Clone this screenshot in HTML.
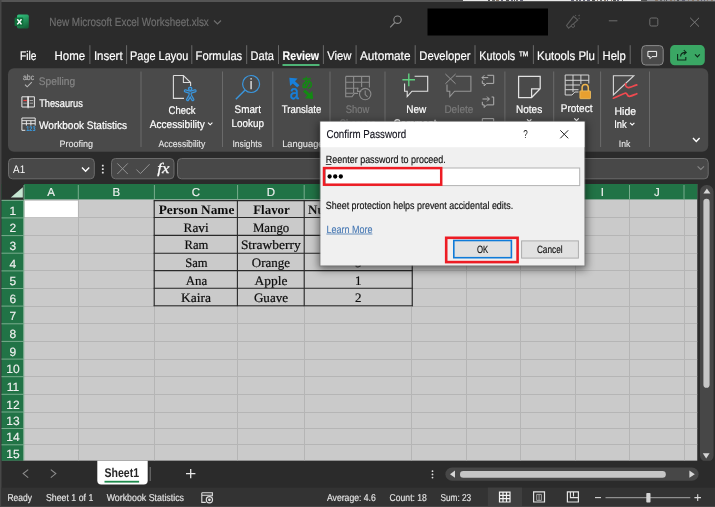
<!DOCTYPE html>
<html><head><meta charset="utf-8"><title>Confirm Password</title>
<style>
html,body{margin:0;padding:0;background:#2b2b2b;width:715px;height:507px;overflow:hidden}
svg{display:block;will-change:transform}
text{white-space:pre}
</style></head><body>
<svg width="715" height="507" viewBox="0 0 715 507" text-rendering="geometricPrecision">
<rect x="0" y="0" width="715" height="507" fill="#2b2b2b" />
<rect x="0" y="0" width="715" height="2" fill="#555555" />
<rect x="463" y="0" width="178" height="1" fill="#e9e9e9" />
<rect x="647" y="0" width="68" height="1" fill="#9fa1a6" />
<rect x="488" y="0" width="2" height="1" fill="#555" />
<rect x="492" y="0" width="3" height="1" fill="#6a6a6a" />
<rect x="496" y="0" width="3" height="1" fill="#8a7a6a" />
<rect x="501" y="0" width="2" height="1" fill="#667" />
<rect x="506" y="0" width="3" height="1" fill="#555" />
<rect x="511" y="0" width="2" height="1" fill="#667" />
<rect x="514" y="0" width="1" height="1" fill="#555" />
<rect x="516" y="0" width="2" height="1" fill="#6a6a6a" />
<rect x="520" y="0" width="3" height="1" fill="#667" />
<rect x="571" y="0" width="3" height="1" fill="#667" />
<rect x="576" y="0" width="2" height="1" fill="#6a6a6a" />
<rect x="579" y="0" width="2" height="1" fill="#667" />
<rect x="583" y="0" width="2" height="1" fill="#667" />
<rect x="587" y="0" width="3" height="1" fill="#667" />
<rect x="592" y="0" width="3" height="1" fill="#555" />
<rect x="597" y="0" width="1" height="1" fill="#8a7a6a" />
<rect x="600" y="0" width="2" height="1" fill="#6a6a6a" />
<rect x="604" y="0" width="2" height="1" fill="#8a7a6a" />
<rect x="607" y="0" width="1" height="1" fill="#667" />
<rect x="611" y="0" width="1" height="1" fill="#8a7a6a" />
<rect x="613" y="0" width="3" height="1" fill="#555" />
<rect x="617" y="0" width="2" height="1" fill="#667" />
<rect x="622" y="0" width="1" height="1" fill="#6a6a6a" />
<rect x="655" y="0" width="3" height="1" fill="#8a7a6a" />
<rect x="660" y="0" width="2" height="1" fill="#6a6a6a" />
<rect x="664" y="0" width="1" height="1" fill="#6a6a6a" />
<rect x="666" y="0" width="1" height="1" fill="#555" />
<rect x="670" y="0" width="2" height="1" fill="#8a7a6a" />
<rect x="674" y="0" width="1" height="1" fill="#8a7a6a" />
<rect x="677" y="0" width="2" height="1" fill="#555" />
<rect x="682" y="0" width="3" height="1" fill="#667" />
<rect x="688" y="0" width="1" height="1" fill="#8a7a6a" />
<rect x="692" y="0" width="2" height="1" fill="#8a7a6a" />
<rect x="697" y="0" width="2" height="1" fill="#8a7a6a" />
<rect x="701" y="0" width="1" height="1" fill="#667" />
<rect x="704" y="0" width="1" height="1" fill="#667" />
<rect x="707" y="0" width="1" height="1" fill="#8a7a6a" />
<rect x="711" y="0" width="2" height="1" fill="#8a7a6a" />
<rect x="0" y="0" width="1.5" height="507" fill="#474747" />
<defs><linearGradient id="xg" x1="0.2" y1="0" x2="0.6" y2="1"><stop offset="0" stop-color="#30c07c"/><stop offset="1" stop-color="#15643a"/></linearGradient></defs>
<rect x="17" y="14.6" width="11.8" height="13.8" fill="url(#xg)" rx="1.6" />
<rect x="14.6" y="17.5" width="8.7" height="8.6" fill="#0f6f3b" rx="1.2" />
<path d="M17.3 19.2 L21.5 24.4 M21.5 19.2 L17.3 24.4" fill="none" stroke="#ffffff" stroke-width="1.5" />
<text x="49.3" y="26.2" font-size="12" fill="#6e6e6e" stroke="#6e6e6e" stroke-width="0.2" font-family="&quot;Liberation Sans&quot;,sans-serif" textLength="159.5" lengthAdjust="spacingAndGlyphs" >New Microsoft Excel Worksheet.xlsx</text>
<path d="M214 20.5 L217.5 24 L221 20.5" fill="none" stroke="#6e6e6e" stroke-width="1.2" />
<circle cx="397.5" cy="19.7" r="3.7" fill="none" stroke="#8a8a8a" stroke-width="1.1"/>
<line x1="394.8" y1="22.5" x2="390.2" y2="27.3" stroke="#8a8a8a" stroke-width="1.1" />
<rect x="427.5" y="8.5" width="120.5" height="27" fill="#000" />
<path d="M566.5 25.6 L573.6 16.3 L577.8 20 L568.6 28.2 Z" fill="none" stroke="#5c5c5c" stroke-width="1.1" />
<circle cx="573" cy="25.8" r="1.6" fill="#2b2b2b" stroke="#5c5c5c" stroke-width="1"/>
<path d="M575.3 15.9 L575.9 15.1 M578.6 16 L579.6 15 M578.6 18.6 L579.6 18" fill="none" stroke="#5c5c5c" stroke-width="1.1" />
<line x1="608.8" y1="20.8" x2="617.4" y2="20.8" stroke="#6e6e6e" stroke-width="1" />
<rect x="649.8" y="18" width="8" height="8" fill="none" rx="1.5" stroke="#707070" stroke-width="1" />
<path d="M690.2 17.8 L699 26.6 M699 17.8 L690.2 26.6" fill="none" stroke="#7c7c7c" stroke-width="1" />
<text x="20.1" y="60.1" font-size="12.5" fill="#ffffff" stroke="#ffffff" stroke-width="0.2" font-family="&quot;Liberation Sans&quot;,sans-serif" textLength="16.4" lengthAdjust="spacingAndGlyphs" >File</text>
<text x="54.6" y="60.1" font-size="12.5" fill="#ffffff" stroke="#ffffff" stroke-width="0.2" font-family="&quot;Liberation Sans&quot;,sans-serif" textLength="30.5" lengthAdjust="spacingAndGlyphs" >Home</text>
<text x="93.9" y="60.1" font-size="12.5" fill="#ffffff" stroke="#ffffff" stroke-width="0.2" font-family="&quot;Liberation Sans&quot;,sans-serif" textLength="28.7" lengthAdjust="spacingAndGlyphs" >Insert</text>
<text x="130.1" y="60.1" font-size="12.5" fill="#ffffff" stroke="#ffffff" stroke-width="0.2" font-family="&quot;Liberation Sans&quot;,sans-serif" textLength="58.2" lengthAdjust="spacingAndGlyphs" >Page Layou</text>
<text x="195.6" y="60.1" font-size="12.5" fill="#ffffff" stroke="#ffffff" stroke-width="0.2" font-family="&quot;Liberation Sans&quot;,sans-serif" textLength="46.6" lengthAdjust="spacingAndGlyphs" >Formulas</text>
<text x="250.5" y="60.1" font-size="12.5" fill="#ffffff" stroke="#ffffff" stroke-width="0.2" font-family="&quot;Liberation Sans&quot;,sans-serif" textLength="23.4" lengthAdjust="spacingAndGlyphs" >Data</text>
<text x="327.2" y="60.1" font-size="12.5" fill="#ffffff" stroke="#ffffff" stroke-width="0.2" font-family="&quot;Liberation Sans&quot;,sans-serif" textLength="24.2" lengthAdjust="spacingAndGlyphs" >View</text>
<text x="359.9" y="60.1" font-size="12.5" fill="#ffffff" stroke="#ffffff" stroke-width="0.2" font-family="&quot;Liberation Sans&quot;,sans-serif" textLength="50.6" lengthAdjust="spacingAndGlyphs" >Automate</text>
<text x="419.3" y="60.1" font-size="12.5" fill="#ffffff" stroke="#ffffff" stroke-width="0.2" font-family="&quot;Liberation Sans&quot;,sans-serif" textLength="51.2" lengthAdjust="spacingAndGlyphs" >Developer</text>
<text x="479.3" y="60.1" font-size="12.5" fill="#ffffff" stroke="#ffffff" stroke-width="0.2" font-family="&quot;Liberation Sans&quot;,sans-serif" textLength="49.6" lengthAdjust="spacingAndGlyphs" >Kutools ™</text>
<text x="537.0" y="60.1" font-size="12.5" fill="#ffffff" stroke="#ffffff" stroke-width="0.2" font-family="&quot;Liberation Sans&quot;,sans-serif" textLength="58.0" lengthAdjust="spacingAndGlyphs" >Kutools Plu</text>
<text x="602.5" y="60.1" font-size="12.5" fill="#ffffff" stroke="#ffffff" stroke-width="0.2" font-family="&quot;Liberation Sans&quot;,sans-serif" textLength="23.2" lengthAdjust="spacingAndGlyphs" >Help</text>
<text x="282.6" y="60.1" font-size="12.5" fill="#ffffff" font-weight="bold" stroke="#ffffff" stroke-width="0.15" font-family="&quot;Liberation Sans&quot;,sans-serif" textLength="36.5" lengthAdjust="spacingAndGlyphs" >Review</text>
<rect x="282.5" y="64" width="37" height="2" fill="#4fb477" />
<line x1="89.9" y1="45.2" x2="89.9" y2="64" stroke="#6a6a6a" stroke-width="1" />
<line x1="126.6" y1="45.2" x2="126.6" y2="64" stroke="#6a6a6a" stroke-width="1" />
<line x1="191.8" y1="45.2" x2="191.8" y2="64" stroke="#6a6a6a" stroke-width="1" />
<line x1="246.7" y1="45.2" x2="246.7" y2="64" stroke="#6a6a6a" stroke-width="1" />
<line x1="278.5" y1="45.2" x2="278.5" y2="64" stroke="#6a6a6a" stroke-width="1" />
<line x1="323.4" y1="45.2" x2="323.4" y2="64" stroke="#6a6a6a" stroke-width="1" />
<line x1="356.1" y1="45.2" x2="356.1" y2="64" stroke="#6a6a6a" stroke-width="1" />
<line x1="415.2" y1="45.2" x2="415.2" y2="64" stroke="#6a6a6a" stroke-width="1" />
<line x1="475" y1="45.2" x2="475" y2="64" stroke="#6a6a6a" stroke-width="1" />
<line x1="533.4" y1="45.2" x2="533.4" y2="64" stroke="#6a6a6a" stroke-width="1" />
<line x1="598.2" y1="45.2" x2="598.2" y2="64" stroke="#6a6a6a" stroke-width="1" />
<line x1="630.2" y1="45.2" x2="630.2" y2="64" stroke="#6a6a6a" stroke-width="1" />
<rect x="641.8" y="45.6" width="21.4" height="19.4" fill="#4a4a4a" rx="3.8" stroke="#8a8a8a" stroke-width="1" />
<path d="M647.9 51.4 H656.6 V56.6 H652 L650 58.6 V56.6 H647.9 Z" fill="none" stroke="#f4f4f4" stroke-width="1" />
<rect x="670.1" y="45.1" width="34.7" height="20.2" fill="#3aa764" rx="4.5" />
<path d="M677.6 54 V60 H685.8 V57 M680.6 56.6 C680.6 53.6 682.6 52.4 685.8 52.4 M683.8 50.2 L686.2 52.4 L683.8 54.6" fill="none" stroke="#0e2a1a" stroke-width="1.1" />
<path d="M695 54.4 L697.4 56.8 L699.8 54.4" fill="none" stroke="#0e2a1a" stroke-width="1.2" />
<rect x="8" y="68.2" width="700.2" height="83.5" fill="#4a4a4a" rx="6" />
<line x1="141" y1="71.5" x2="141" y2="147" stroke="#6a6a6a" stroke-width="1" />
<line x1="222.5" y1="71.5" x2="222.5" y2="147" stroke="#6a6a6a" stroke-width="1" />
<line x1="272.8" y1="71.5" x2="272.8" y2="147" stroke="#6a6a6a" stroke-width="1" />
<line x1="330" y1="71.5" x2="330" y2="147" stroke="#6a6a6a" stroke-width="1" />
<line x1="385" y1="71.5" x2="385" y2="147" stroke="#6a6a6a" stroke-width="1" />
<line x1="504.9" y1="71.5" x2="504.9" y2="147" stroke="#6a6a6a" stroke-width="1" />
<line x1="553.7" y1="71.5" x2="553.7" y2="147" stroke="#6a6a6a" stroke-width="1" />
<line x1="600.6" y1="71.5" x2="600.6" y2="147" stroke="#6a6a6a" stroke-width="1" />
<line x1="649.5" y1="71.5" x2="649.5" y2="147" stroke="#6a6a6a" stroke-width="1" />
<text x="38.8" y="85.2" font-size="11" fill="#858585" stroke="#858585" stroke-width="0.2" font-family="&quot;Liberation Sans&quot;,sans-serif" textLength="36.3" lengthAdjust="spacingAndGlyphs" >Spelling</text>
<text x="39.2" y="106.8" font-size="11" fill="#ffffff" stroke="#ffffff" stroke-width="0.2" font-family="&quot;Liberation Sans&quot;,sans-serif" textLength="43.7" lengthAdjust="spacingAndGlyphs" >Thesaurus</text>
<text x="39.0" y="128.8" font-size="11" fill="#ffffff" stroke="#ffffff" stroke-width="0.2" font-family="&quot;Liberation Sans&quot;,sans-serif" textLength="88.1" lengthAdjust="spacingAndGlyphs" >Workbook Statistics</text>
<text x="59.4" y="146.7" font-size="9.5" fill="#e8e8e8" stroke="#e8e8e8" stroke-width="0.1" font-family="&quot;Liberation Sans&quot;,sans-serif" textLength="33.5" lengthAdjust="spacingAndGlyphs" >Proofing</text>
<text x="22.9" y="80.2" font-size="8" fill="#b4b4b4" stroke="#b4b4b4" stroke-width="0.15" font-family="&quot;Liberation Sans&quot;,sans-serif" textLength="11.3" lengthAdjust="spacingAndGlyphs" >abc</text>
<path d="M25 84.6 L27.2 86.8 L31.8 82.2" fill="none" stroke="#b4b4b4" stroke-width="1.1" />
<path d="M21.9 96.8 H28.1 V107 H21.9 Z M28.1 96.8 H34.4 V107 H28.1 Z M28.1 96.2 V108.3" fill="none" stroke="#e6e6e6" stroke-width="1" />
<line x1="23.4" y1="100.5" x2="26.8" y2="100.5" stroke="#ee4444" stroke-width="1.2" />
<path d="M23.4 103.2 H26.8 M29.6 100.5 H33 M29.6 103.2 H33" fill="none" stroke="#bdbdbd" stroke-width="0.8" />
<path d="M21.9 118 H35.2 V125.6 M21.9 118 V130.3 H25.3 M21.9 120.7 H35.2 M21.9 123.7 H35.2 M26.4 120.7 V125.6 M30.9 120.7 V125.6" fill="none" stroke="#e6e6e6" stroke-width="1" />
<text x="26.3" y="131.4" font-size="6.8" fill="#3a9ee6" font-weight="bold" font-family="&quot;Liberation Sans&quot;,sans-serif" textLength="9.2" lengthAdjust="spacingAndGlyphs" >123</text>
<path d="M173.4 75.5 H183.4 L190.6 82.5 V86 M173.4 75.5 V98.4 H185 M183.4 75.5 V82.5 H190.6" fill="none" stroke="#dcdcdc" stroke-width="1.1" />
<rect x="184" y="86.2" width="12.5" height="14.8" fill="#4a4a4a" />
<path d="M185.4 90.9 L190.2 92.3 L195 90.9 M190.2 92.3 V95.6 M190.2 95.2 L187.6 99.6 M190.2 95.2 L192.8 99.6" fill="none" stroke="#3a96dd" stroke-width="3.3" stroke-linecap="round" stroke-linejoin="round"/>
<circle cx="190.2" cy="88.8" r="2.3" fill="#3a96dd"/>
<path d="M185.4 90.9 L190.2 92.3 L195 90.9 M190.2 92.3 V95.6 M190.2 95.2 L187.6 99.6 M190.2 95.2 L192.8 99.6" fill="none" stroke="#4a4a4a" stroke-width="0.8" stroke-linecap="round" stroke-linejoin="round"/>
<circle cx="190.2" cy="88.8" r="0.9" fill="#4a4a4a"/>
<text x="168.6" y="114.1" font-size="11" fill="#ffffff" stroke="#ffffff" stroke-width="0.2" font-family="&quot;Liberation Sans&quot;,sans-serif" textLength="26.8" lengthAdjust="spacingAndGlyphs" >Check</text>
<text x="149.7" y="128.2" font-size="11" fill="#ffffff" stroke="#ffffff" stroke-width="0.2" font-family="&quot;Liberation Sans&quot;,sans-serif" textLength="55.2" lengthAdjust="spacingAndGlyphs" >Accessibility</text>
<path d="M208 122.6 L210.2 124.8 L212.4 122.6" fill="none" stroke="#ffffff" stroke-width="1.1" />
<text x="158.5" y="146.7" font-size="9.5" fill="#e8e8e8" stroke="#e8e8e8" stroke-width="0.1" font-family="&quot;Liberation Sans&quot;,sans-serif" textLength="46.8" lengthAdjust="spacingAndGlyphs" >Accessibility</text>
<circle cx="251.1" cy="84" r="8.5" fill="none" stroke="#3a96dd" stroke-width="1.2"/>
<line x1="244.9" y1="90.2" x2="235.8" y2="99.3" stroke="#3a96dd" stroke-width="1.4" />
<line x1="251.1" y1="81" x2="251.1" y2="89.3" stroke="#cfcfcf" stroke-width="1.6" />
<circle cx="251.1" cy="78.8" r="0.9" fill="#cfcfcf"/>
<text x="234.6" y="113.1" font-size="11" fill="#ffffff" stroke="#ffffff" stroke-width="0.2" font-family="&quot;Liberation Sans&quot;,sans-serif" textLength="26.3" lengthAdjust="spacingAndGlyphs" >Smart</text>
<text x="231.5" y="126.7" font-size="11" fill="#ffffff" stroke="#ffffff" stroke-width="0.2" font-family="&quot;Liberation Sans&quot;,sans-serif" textLength="32.5" lengthAdjust="spacingAndGlyphs" >Lookup</text>
<text x="232.5" y="146.7" font-size="9.5" fill="#e8e8e8" stroke="#e8e8e8" stroke-width="0.1" font-family="&quot;Liberation Sans&quot;,sans-serif" textLength="29.4" lengthAdjust="spacingAndGlyphs" >Insights</text>
<text x="289.7" y="98.9" font-size="20" fill="#1780dc" stroke="#1780dc" stroke-width="0.5" font-family="&quot;Liberation Sans&quot;,sans-serif" textLength="9.1" lengthAdjust="spacingAndGlyphs" >a</text>
<text x="301.2" y="87.6" font-size="14" fill="#138a13" font-weight="bold" font-family="&quot;Liberation Sans&quot;,sans-serif" textLength="11.7" lengthAdjust="spacingAndGlyphs" style="font-family:&quot;Liberation Sans&quot;,&quot;Noto Sans CJK JP&quot;,sans-serif">あ</text>
<path d="M289.3 77.8 L297.6 78.6 L295 81.2 L299.4 85.2 L297.2 87.4 L292.8 83.4 L290.1 86.1 Z" fill="#1780dc" stroke="none" stroke-width="1" />
<path d="M313.1 99 L304.8 98.2 L307.4 95.6 L303 91.6 L305.2 89.4 L309.6 93.4 L312.3 90.7 Z" fill="#138a13" stroke="none" stroke-width="1" />
<text x="281.8" y="113.1" font-size="11" fill="#ffffff" stroke="#ffffff" stroke-width="0.2" font-family="&quot;Liberation Sans&quot;,sans-serif" textLength="39.4" lengthAdjust="spacingAndGlyphs" >Translate</text>
<text x="282.2" y="146.7" font-size="9.5" fill="#e8e8e8" stroke="#e8e8e8" stroke-width="0.1" font-family="&quot;Liberation Sans&quot;,sans-serif" textLength="41.3" lengthAdjust="spacingAndGlyphs" >Language</text>
<path d="M345.7 76.4 H369.4 V87.4 M345.7 76.4 V96.8 H352 L354.4 93.4 H358 M345.7 82.2 H369.4 M345.7 88.2 H358.5 M345.7 93.3 H353 M353.6 76.4 V93.3 M361.6 76.4 V87" fill="none" stroke="#8c8c8c" stroke-width="1.1" />
<circle cx="365.2" cy="94.1" r="5.7" fill="#4a4a4a" stroke="#8c8c8c" stroke-width="1.1"/>
<path d="M365.2 90.4 V94.6 L367.6 96.9" fill="none" stroke="#8c8c8c" stroke-width="1.1" />
<path d="M357.6 87.8 V91.4 H361.2" fill="none" stroke="#8c8c8c" stroke-width="1.1" />
<text x="345.8" y="113.1" font-size="11" fill="#7a7a7a" stroke="#7a7a7a" stroke-width="0.2" font-family="&quot;Liberation Sans&quot;,sans-serif" textLength="23.5" lengthAdjust="spacingAndGlyphs" >Show</text>
<text x="339.5" y="126.7" font-size="11" fill="#7a7a7a" stroke="#7a7a7a" stroke-width="0.2" font-family="&quot;Liberation Sans&quot;,sans-serif" textLength="36.0" lengthAdjust="spacingAndGlyphs" >Changes</text>
<path d="M414.6 76.2 H427.7 V91.2 H412 L407.2 96.6 V91.2 H404.6 V83.5" fill="none" stroke="#e4e4e4" stroke-width="1.1" />
<path d="M408.8 73.4 V86.2 M402.4 79.7 H415" fill="none" stroke="#5fd07f" stroke-width="1.4" />
<text x="406.2" y="113.1" font-size="11" fill="#ffffff" stroke="#ffffff" stroke-width="0.2" font-family="&quot;Liberation Sans&quot;,sans-serif" textLength="20.0" lengthAdjust="spacingAndGlyphs" >New</text>
<text x="393.6" y="126.7" font-size="11" fill="#ffffff" stroke="#ffffff" stroke-width="0.2" font-family="&quot;Liberation Sans&quot;,sans-serif" textLength="43.0" lengthAdjust="spacingAndGlyphs" >Comment</text>
<path d="M455.8 76.2 H470.9 V91.2 H454.6 L449.8 96.6 V91.2 H447 V84.5" fill="none" stroke="#969696" stroke-width="1.1" />
<path d="M445.4 74 L455.6 83.8 M455.6 74 L445.4 83.8" fill="none" stroke="#969696" stroke-width="1" />
<text x="444.4" y="113.1" font-size="11" fill="#7a7a7a" stroke="#7a7a7a" stroke-width="0.2" font-family="&quot;Liberation Sans&quot;,sans-serif" textLength="28.9" lengthAdjust="spacingAndGlyphs" >Delete</text>
<path d="M487.4 75.3 H493.7 V83.4 H486.6 L484.2 86 V83.4 H482.3 V80.6" fill="none" stroke="#b0b0b0" stroke-width="1" />
<path d="M482 77.6 H488.2 M484.4 75.2 L482 77.6 L484.4 80" fill="none" stroke="#b0b0b0" stroke-width="1" />
<path d="M482.3 101.8 V104.9 H484.2 V107.5 L486.6 104.9 H493.7 V97 H491.6" fill="none" stroke="#b0b0b0" stroke-width="1" />
<path d="M482.5 99 H489.3 M487 96.6 L489.4 99 L487 101.4" fill="none" stroke="#b0b0b0" stroke-width="1" />
<path d="M482.3 121.6 V118.7 H493.7 V121.6" fill="none" stroke="#b0b0b0" stroke-width="1" />
<path d="M518.6 76.4 H540.2 V88.8 L531.6 97.5 H518.6 Z M540.2 88.8 H531.6 V97.5" fill="none" stroke="#e2e2e2" stroke-width="1.25" />
<text x="516.0" y="113.1" font-size="11" fill="#ffffff" stroke="#ffffff" stroke-width="0.2" font-family="&quot;Liberation Sans&quot;,sans-serif" textLength="26.2" lengthAdjust="spacingAndGlyphs" >Notes</text>
<path d="M527 119.3 L529.2 121.5 L531.4 119.3" fill="none" stroke="#ffffff" stroke-width="1.1" />
<path d="M565.2 75 H588.8 V83.5 M565.2 75 V95 H572 L574.8 92 H578.5 M565.2 80.3 H588.8 M565.2 85 H580 M565.2 89.7 H578.5 M573 75 V92 M580.9 75 V84" fill="none" stroke="#d4d4d4" stroke-width="1" />
<path d="M582.1 91 V87.6 A3.1 3.1 0 0 1 588.3 87.6 V91" fill="none" stroke="#f0b64e" stroke-width="1.5" />
<rect x="579.9" y="90.9" width="10.6" height="7.8" fill="#e8a030" rx="0.6" stroke="#f3c060" stroke-width="0.8" />
<text x="560.7" y="112.0" font-size="11" fill="#ffffff" stroke="#ffffff" stroke-width="0.2" font-family="&quot;Liberation Sans&quot;,sans-serif" textLength="31.8" lengthAdjust="spacingAndGlyphs" >Protect</text>
<path d="M574.3 118.4 L576.5 120.6 L578.7 118.4" fill="none" stroke="#ffffff" stroke-width="1.1" />
<path d="M613.4 75.7 H633.8 L613.4 95 Z" fill="none" stroke="#d8d8d8" stroke-width="1.1" />
<path d="M625.8 83.8 C624.5 86 627 88.2 629.5 87.4 C632 86.6 634 85.8 636.8 84.9 M613.4 98.2 C618 96.8 622 94 625 93.2 C628 92.5 626.5 96.6 629.5 96.3 C632 96 634 94.8 636.8 93.7" fill="none" stroke="#f04a50" stroke-width="1.7" stroke-linecap="round"/>
<text x="614.6" y="114.5" font-size="11" fill="#ffffff" stroke="#ffffff" stroke-width="0.2" font-family="&quot;Liberation Sans&quot;,sans-serif" textLength="21.4" lengthAdjust="spacingAndGlyphs" >Hide</text>
<text x="614.2" y="128.1" font-size="11" fill="#ffffff" stroke="#ffffff" stroke-width="0.2" font-family="&quot;Liberation Sans&quot;,sans-serif" textLength="12.5" lengthAdjust="spacingAndGlyphs" >Ink</text>
<path d="M630 122.8 L632.2 125 L634.4 122.8" fill="none" stroke="#ffffff" stroke-width="1.1" />
<text x="618.8" y="147.0" font-size="9.5" fill="#e8e8e8" stroke="#e8e8e8" stroke-width="0.1" font-family="&quot;Liberation Sans&quot;,sans-serif" textLength="11.5" lengthAdjust="spacingAndGlyphs" >Ink</text>
<path d="M693 138 L696.3 141.4 L699.6 138" fill="none" stroke="#ffffff" stroke-width="1.4" />
<rect x="8.5" y="158.5" width="85.8" height="20.3" fill="#484848" rx="4" stroke="#6c6c6c" stroke-width="1" />
<text x="13.1" y="173.0" font-size="11" fill="#ffffff" font-family="&quot;Liberation Sans&quot;,sans-serif" textLength="12.1" lengthAdjust="spacingAndGlyphs" >A1</text>
<path d="M82 167.6 L85.6 171.2 L89.2 167.6" fill="none" stroke="#ffffff" stroke-width="1.4" />
<rect x="101.9" y="164.7" width="1.8" height="1.8" fill="#e2e2e2" rx="0.3" />
<rect x="101.9" y="168.2" width="1.8" height="1.8" fill="#e2e2e2" rx="0.3" />
<rect x="101.9" y="171.7" width="1.8" height="1.8" fill="#e2e2e2" rx="0.3" />
<rect x="111.5" y="158.5" width="62.5" height="20.3" fill="#484848" rx="4" stroke="#6c6c6c" stroke-width="1" />
<path d="M117.3 163.4 L127.8 174 M127.8 163.4 L117.3 174" fill="none" stroke="#929292" stroke-width="1" />
<path d="M136.4 169.5 L140.4 173.6 L149.6 164.2" fill="none" stroke="#929292" stroke-width="1" />
<text x="157.3" y="172.6" font-size="14.5" fill="#ffffff" font-style="italic" stroke="#ffffff" stroke-width="0.25" font-family="&quot;Liberation Serif&quot;,serif" textLength="12.1" lengthAdjust="spacingAndGlyphs" >fx</text>
<rect x="177.5" y="158.5" width="530.7" height="20.3" fill="#484848" rx="4" stroke="#6c6c6c" stroke-width="1" />
<path d="M697.6 166.3 L700.8 169.5 L704 166.3" fill="none" stroke="#858585" stroke-width="1.1" />
<rect x="2" y="184.0" width="695.5" height="276.8" fill="#cacaca" />
<line x1="78.5" y1="200" x2="78.5" y2="460.8" stroke="#b5b5b5" stroke-width="1" />
<line x1="154.5" y1="200" x2="154.5" y2="460.8" stroke="#b5b5b5" stroke-width="1" />
<line x1="237.5" y1="200" x2="237.5" y2="460.8" stroke="#b5b5b5" stroke-width="1" />
<line x1="304.5" y1="200" x2="304.5" y2="460.8" stroke="#b5b5b5" stroke-width="1" />
<line x1="411.5" y1="200" x2="411.5" y2="460.8" stroke="#b5b5b5" stroke-width="1" />
<line x1="466.5" y1="200" x2="466.5" y2="460.8" stroke="#b5b5b5" stroke-width="1" />
<line x1="520.5" y1="200" x2="520.5" y2="460.8" stroke="#b5b5b5" stroke-width="1" />
<line x1="575.5" y1="200" x2="575.5" y2="460.8" stroke="#b5b5b5" stroke-width="1" />
<line x1="629.5" y1="200" x2="629.5" y2="460.8" stroke="#b5b5b5" stroke-width="1" />
<line x1="684.5" y1="200" x2="684.5" y2="460.8" stroke="#b5b5b5" stroke-width="1" />
<line x1="24" y1="217.5" x2="697.5" y2="217.5" stroke="#b5b5b5" stroke-width="1" />
<line x1="24" y1="235.5" x2="697.5" y2="235.5" stroke="#b5b5b5" stroke-width="1" />
<line x1="24" y1="253.5" x2="697.5" y2="253.5" stroke="#b5b5b5" stroke-width="1" />
<line x1="24" y1="270.5" x2="697.5" y2="270.5" stroke="#b5b5b5" stroke-width="1" />
<line x1="24" y1="288.5" x2="697.5" y2="288.5" stroke="#b5b5b5" stroke-width="1" />
<line x1="24" y1="306.5" x2="697.5" y2="306.5" stroke="#b5b5b5" stroke-width="1" />
<line x1="24" y1="323.5" x2="697.5" y2="323.5" stroke="#b5b5b5" stroke-width="1" />
<line x1="24" y1="341.5" x2="697.5" y2="341.5" stroke="#b5b5b5" stroke-width="1" />
<line x1="24" y1="359.5" x2="697.5" y2="359.5" stroke="#b5b5b5" stroke-width="1" />
<line x1="24" y1="376.5" x2="697.5" y2="376.5" stroke="#b5b5b5" stroke-width="1" />
<line x1="24" y1="394.5" x2="697.5" y2="394.5" stroke="#b5b5b5" stroke-width="1" />
<line x1="24" y1="412.5" x2="697.5" y2="412.5" stroke="#b5b5b5" stroke-width="1" />
<line x1="24" y1="428.5" x2="697.5" y2="428.5" stroke="#b5b5b5" stroke-width="1" />
<line x1="24" y1="444.5" x2="697.5" y2="444.5" stroke="#b5b5b5" stroke-width="1" />
<rect x="24.8" y="200.9" width="53.1" height="16.3" fill="#fff" />
<rect x="1.5" y="184.0" width="696.0" height="15.4" fill="#217346" />
<rect x="1.5" y="184.0" width="22.5" height="16" fill="#2b2b2b" />
<path d="M22.8 187.2 V197.6 H10.8 Z" fill="#c6e6d2" stroke="none" stroke-width="1" />
<line x1="24" y1="185.0" x2="24" y2="199.7" stroke="#79ad8e" stroke-width="1" />
<line x1="78.3" y1="185.0" x2="78.3" y2="199.7" stroke="#79ad8e" stroke-width="1" />
<line x1="154.4" y1="185.0" x2="154.4" y2="199.7" stroke="#79ad8e" stroke-width="1" />
<line x1="237.6" y1="185.0" x2="237.6" y2="199.7" stroke="#79ad8e" stroke-width="1" />
<line x1="304.2" y1="185.0" x2="304.2" y2="199.7" stroke="#79ad8e" stroke-width="1" />
<line x1="411.6" y1="185.0" x2="411.6" y2="199.7" stroke="#79ad8e" stroke-width="1" />
<line x1="466.1" y1="185.0" x2="466.1" y2="199.7" stroke="#79ad8e" stroke-width="1" />
<line x1="520.6" y1="185.0" x2="520.6" y2="199.7" stroke="#79ad8e" stroke-width="1" />
<line x1="575.1" y1="185.0" x2="575.1" y2="199.7" stroke="#79ad8e" stroke-width="1" />
<line x1="629.5" y1="185.0" x2="629.5" y2="199.7" stroke="#79ad8e" stroke-width="1" />
<line x1="684" y1="185.0" x2="684" y2="199.7" stroke="#79ad8e" stroke-width="1" />
<text x="51.15" y="196.4" font-size="11.5" fill="#f0f0f0" stroke="#f0f0f0" stroke-width="0.15" text-anchor="middle" font-family="&quot;Liberation Sans&quot;,sans-serif">A</text>
<text x="116.35" y="196.4" font-size="11.5" fill="#f0f0f0" stroke="#f0f0f0" stroke-width="0.15" text-anchor="middle" font-family="&quot;Liberation Sans&quot;,sans-serif">B</text>
<text x="196.0" y="196.4" font-size="11.5" fill="#f0f0f0" stroke="#f0f0f0" stroke-width="0.15" text-anchor="middle" font-family="&quot;Liberation Sans&quot;,sans-serif">C</text>
<text x="270.9" y="196.4" font-size="11.5" fill="#f0f0f0" stroke="#f0f0f0" stroke-width="0.15" text-anchor="middle" font-family="&quot;Liberation Sans&quot;,sans-serif">D</text>
<text x="357.9" y="196.4" font-size="11.5" fill="#f0f0f0" stroke="#f0f0f0" stroke-width="0.15" text-anchor="middle" font-family="&quot;Liberation Sans&quot;,sans-serif">E</text>
<text x="438.85" y="196.4" font-size="11.5" fill="#f0f0f0" stroke="#f0f0f0" stroke-width="0.15" text-anchor="middle" font-family="&quot;Liberation Sans&quot;,sans-serif">F</text>
<text x="493.35" y="196.4" font-size="11.5" fill="#f0f0f0" stroke="#f0f0f0" stroke-width="0.15" text-anchor="middle" font-family="&quot;Liberation Sans&quot;,sans-serif">G</text>
<text x="547.85" y="196.4" font-size="11.5" fill="#f0f0f0" stroke="#f0f0f0" stroke-width="0.15" text-anchor="middle" font-family="&quot;Liberation Sans&quot;,sans-serif">H</text>
<text x="602.3" y="196.4" font-size="11.5" fill="#f0f0f0" stroke="#f0f0f0" stroke-width="0.15" text-anchor="middle" font-family="&quot;Liberation Sans&quot;,sans-serif">I</text>
<text x="656.75" y="196.4" font-size="11.5" fill="#f0f0f0" stroke="#f0f0f0" stroke-width="0.15" text-anchor="middle" font-family="&quot;Liberation Sans&quot;,sans-serif">J</text>
<rect x="1.5" y="200.3" width="22" height="260.5" fill="#217346" />
<line x1="23.8" y1="200.3" x2="23.8" y2="460.8" stroke="#79ad8e" stroke-width="1" />
<line x1="1.5" y1="200.3" x2="24" y2="200.3" stroke="#79ad8e" stroke-width="1" />
<text x="12.9" y="214.6" font-size="12" fill="#f0f0f0" stroke="#f0f0f0" stroke-width="0.15" text-anchor="middle" font-family="&quot;Liberation Sans&quot;,sans-serif">1</text>
<line x1="1.5" y1="217.9" x2="24" y2="217.9" stroke="#79ad8e" stroke-width="1" />
<text x="12.9" y="232.2" font-size="12" fill="#f0f0f0" stroke="#f0f0f0" stroke-width="0.15" text-anchor="middle" font-family="&quot;Liberation Sans&quot;,sans-serif">2</text>
<line x1="1.5" y1="235.6" x2="24" y2="235.6" stroke="#79ad8e" stroke-width="1" />
<text x="12.9" y="249.9" font-size="12" fill="#f0f0f0" stroke="#f0f0f0" stroke-width="0.15" text-anchor="middle" font-family="&quot;Liberation Sans&quot;,sans-serif">3</text>
<line x1="1.5" y1="253.2" x2="24" y2="253.2" stroke="#79ad8e" stroke-width="1" />
<text x="12.9" y="267.5" font-size="12" fill="#f0f0f0" stroke="#f0f0f0" stroke-width="0.15" text-anchor="middle" font-family="&quot;Liberation Sans&quot;,sans-serif">4</text>
<line x1="1.5" y1="270.9" x2="24" y2="270.9" stroke="#79ad8e" stroke-width="1" />
<text x="12.9" y="285.2" font-size="12" fill="#f0f0f0" stroke="#f0f0f0" stroke-width="0.15" text-anchor="middle" font-family="&quot;Liberation Sans&quot;,sans-serif">5</text>
<line x1="1.5" y1="288.5" x2="24" y2="288.5" stroke="#79ad8e" stroke-width="1" />
<text x="12.9" y="302.8" font-size="12" fill="#f0f0f0" stroke="#f0f0f0" stroke-width="0.15" text-anchor="middle" font-family="&quot;Liberation Sans&quot;,sans-serif">6</text>
<line x1="1.5" y1="306.1" x2="24" y2="306.1" stroke="#79ad8e" stroke-width="1" />
<text x="12.9" y="320.4" font-size="12" fill="#f0f0f0" stroke="#f0f0f0" stroke-width="0.15" text-anchor="middle" font-family="&quot;Liberation Sans&quot;,sans-serif">7</text>
<line x1="1.5" y1="323.8" x2="24" y2="323.8" stroke="#79ad8e" stroke-width="1" />
<text x="12.9" y="338.1" font-size="12" fill="#f0f0f0" stroke="#f0f0f0" stroke-width="0.15" text-anchor="middle" font-family="&quot;Liberation Sans&quot;,sans-serif">8</text>
<line x1="1.5" y1="341.4" x2="24" y2="341.4" stroke="#79ad8e" stroke-width="1" />
<text x="12.9" y="355.7" font-size="12" fill="#f0f0f0" stroke="#f0f0f0" stroke-width="0.15" text-anchor="middle" font-family="&quot;Liberation Sans&quot;,sans-serif">9</text>
<line x1="1.5" y1="359.1" x2="24" y2="359.1" stroke="#79ad8e" stroke-width="1" />
<text x="12.9" y="373.4" font-size="12" fill="#f0f0f0" stroke="#f0f0f0" stroke-width="0.15" text-anchor="middle" font-family="&quot;Liberation Sans&quot;,sans-serif">10</text>
<line x1="1.5" y1="376.7" x2="24" y2="376.7" stroke="#79ad8e" stroke-width="1" />
<text x="12.9" y="391.0" font-size="12" fill="#f0f0f0" stroke="#f0f0f0" stroke-width="0.15" text-anchor="middle" font-family="&quot;Liberation Sans&quot;,sans-serif">11</text>
<line x1="1.5" y1="394.3" x2="24" y2="394.3" stroke="#79ad8e" stroke-width="1" />
<text x="12.9" y="408.6" font-size="12" fill="#f0f0f0" stroke="#f0f0f0" stroke-width="0.15" text-anchor="middle" font-family="&quot;Liberation Sans&quot;,sans-serif">12</text>
<line x1="1.5" y1="412.0" x2="24" y2="412.0" stroke="#79ad8e" stroke-width="1" />
<text x="12.9" y="424.7" font-size="12" fill="#f0f0f0" stroke="#f0f0f0" stroke-width="0.15" text-anchor="middle" font-family="&quot;Liberation Sans&quot;,sans-serif">13</text>
<line x1="1.5" y1="428.5" x2="24" y2="428.5" stroke="#79ad8e" stroke-width="1" />
<text x="12.9" y="441.2" font-size="12" fill="#f0f0f0" stroke="#f0f0f0" stroke-width="0.15" text-anchor="middle" font-family="&quot;Liberation Sans&quot;,sans-serif">14</text>
<line x1="1.5" y1="444.8" x2="24" y2="444.8" stroke="#79ad8e" stroke-width="1" />
<text x="12.9" y="457.5" font-size="12" fill="#f0f0f0" stroke="#f0f0f0" stroke-width="0.15" text-anchor="middle" font-family="&quot;Liberation Sans&quot;,sans-serif">15</text>
<line x1="153.7" y1="200.6" x2="412.8" y2="200.6" stroke="#2a2a2a" stroke-width="1.1" />
<line x1="153.7" y1="217.5" x2="412.8" y2="217.5" stroke="#2a2a2a" stroke-width="1.1" />
<line x1="153.7" y1="235.4" x2="412.8" y2="235.4" stroke="#2a2a2a" stroke-width="1.1" />
<line x1="153.7" y1="253.2" x2="412.8" y2="253.2" stroke="#2a2a2a" stroke-width="1.1" />
<line x1="153.7" y1="270.6" x2="412.8" y2="270.6" stroke="#2a2a2a" stroke-width="1.1" />
<line x1="153.7" y1="288.2" x2="412.8" y2="288.2" stroke="#2a2a2a" stroke-width="1.1" />
<line x1="153.7" y1="305.8" x2="412.8" y2="305.8" stroke="#2a2a2a" stroke-width="1.1" />
<line x1="154.2" y1="200.6" x2="154.2" y2="306.3" stroke="#2a2a2a" stroke-width="1.1" />
<line x1="237.4" y1="200.6" x2="237.4" y2="306.3" stroke="#2a2a2a" stroke-width="1.1" />
<line x1="304.2" y1="200.6" x2="304.2" y2="306.3" stroke="#2a2a2a" stroke-width="1.1" />
<line x1="412.3" y1="200.6" x2="412.3" y2="306.3" stroke="#2a2a2a" stroke-width="1.1" />
<text x="158.7" y="213.8" font-size="13" fill="#0c0c0c" font-weight="bold" font-family="&quot;Liberation Serif&quot;,serif" textLength="75.6" lengthAdjust="spacingAndGlyphs" >Person Name</text>
<text x="253.2" y="213.8" font-size="13" fill="#0c0c0c" font-weight="bold" font-family="&quot;Liberation Serif&quot;,serif" textLength="36.6" lengthAdjust="spacingAndGlyphs" >Flavor</text>
<text x="308.0" y="213.8" font-size="13" fill="#141414" font-weight="bold" font-family="&quot;Liberation Serif&quot;,serif" textLength="46.4" lengthAdjust="spacingAndGlyphs" >Number</text>
<text x="183.6" y="231.5" font-size="13" fill="#0c0c0c" stroke="#0c0c0c" stroke-width="0.2" font-family="&quot;Liberation Serif&quot;,serif" textLength="25.1" lengthAdjust="spacingAndGlyphs" >Ravi</text>
<text x="184.5" y="249.0" font-size="13" fill="#0c0c0c" stroke="#0c0c0c" stroke-width="0.2" font-family="&quot;Liberation Serif&quot;,serif" textLength="23.8" lengthAdjust="spacingAndGlyphs" >Ram</text>
<text x="185.2" y="266.8" font-size="13" fill="#0c0c0c" stroke="#0c0c0c" stroke-width="0.2" font-family="&quot;Liberation Serif&quot;,serif" textLength="22.4" lengthAdjust="spacingAndGlyphs" >Sam</text>
<text x="185.7" y="284.5" font-size="13" fill="#0c0c0c" stroke="#0c0c0c" stroke-width="0.2" font-family="&quot;Liberation Serif&quot;,serif" textLength="21.4" lengthAdjust="spacingAndGlyphs" >Ana</text>
<text x="181.0" y="302.0" font-size="13" fill="#0c0c0c" stroke="#0c0c0c" stroke-width="0.2" font-family="&quot;Liberation Serif&quot;,serif" textLength="30.1" lengthAdjust="spacingAndGlyphs" >Kaira</text>
<text x="252.9" y="231.5" font-size="13" fill="#0c0c0c" stroke="#0c0c0c" stroke-width="0.2" font-family="&quot;Liberation Serif&quot;,serif" textLength="36.4" lengthAdjust="spacingAndGlyphs" >Mango</text>
<text x="240.9" y="249.0" font-size="13" fill="#0c0c0c" stroke="#0c0c0c" stroke-width="0.2" font-family="&quot;Liberation Serif&quot;,serif" textLength="59.8" lengthAdjust="spacingAndGlyphs" >Strawberry</text>
<text x="251.8" y="266.8" font-size="13" fill="#0c0c0c" stroke="#0c0c0c" stroke-width="0.2" font-family="&quot;Liberation Serif&quot;,serif" textLength="38.2" lengthAdjust="spacingAndGlyphs" >Orange</text>
<text x="254.6" y="284.5" font-size="13" fill="#0c0c0c" stroke="#0c0c0c" stroke-width="0.2" font-family="&quot;Liberation Serif&quot;,serif" textLength="32.8" lengthAdjust="spacingAndGlyphs" >Apple</text>
<text x="253.9" y="302.0" font-size="13" fill="#0c0c0c" stroke="#0c0c0c" stroke-width="0.2" font-family="&quot;Liberation Serif&quot;,serif" textLength="34.2" lengthAdjust="spacingAndGlyphs" >Guave</text>
<text x="358.3" y="231.5" font-size="13" fill="#0c0c0c" stroke="#0c0c0c" stroke-width="0.2" text-anchor="middle" font-family="&quot;Liberation Serif&quot;,serif">3</text>
<text x="358.3" y="249.0" font-size="13" fill="#0c0c0c" stroke="#0c0c0c" stroke-width="0.2" text-anchor="middle" font-family="&quot;Liberation Serif&quot;,serif">4</text>
<text x="358.3" y="266.8" font-size="13" fill="#0c0c0c" stroke="#0c0c0c" stroke-width="0.2" text-anchor="middle" font-family="&quot;Liberation Serif&quot;,serif">5</text>
<text x="358.3" y="284.5" font-size="13" fill="#0c0c0c" stroke="#0c0c0c" stroke-width="0.2" text-anchor="middle" font-family="&quot;Liberation Serif&quot;,serif">1</text>
<text x="358.3" y="302.0" font-size="13" fill="#0c0c0c" stroke="#0c0c0c" stroke-width="0.2" text-anchor="middle" font-family="&quot;Liberation Serif&quot;,serif">2</text>
<rect x="697.5" y="184.0" width="17.5" height="277.8" fill="#2b2b2b" />
<rect x="700" y="185" width="13.6" height="277" fill="#474747" rx="6.5" />
<path d="M703.4 193.4 L706.9 188.4 L710.4 193.4 Z" fill="#d6d6d6" stroke="none" stroke-width="1" />
<rect x="703.4" y="198.8" width="6.2" height="189" fill="#c6c6c6" rx="3.1" />
<path d="M702.8 453.2 L706.2 458.4 L709.6 453.2 Z" fill="#d6d6d6" stroke="none" stroke-width="1" />
<rect x="2" y="460.8" width="713" height="26.5" fill="#2b2b2b" />
<path d="M28.2 469.6 L23.2 473.6 L28.2 477.6" fill="none" stroke="#8d8d8d" stroke-width="1.1" />
<path d="M50.8 469.6 L55.8 473.6 L50.8 477.6" fill="none" stroke="#8d8d8d" stroke-width="1.1" />
<path d="M97.3 460.8 H147.7 V480.6 Q147.7 484.6 143.7 484.6 H101.3 Q97.3 484.6 97.3 480.6 Z" fill="#ffffff" stroke="none" stroke-width="1" />
<text x="104.5" y="477.1" font-size="12.7" fill="#262626" font-weight="bold" font-family="&quot;Liberation Sans&quot;,sans-serif" textLength="34.6" lengthAdjust="spacingAndGlyphs" >Sheet1</text>
<rect x="104.5" y="480.8" width="34.6" height="1.8" fill="#1f8a4c" />
<line x1="150.2" y1="467" x2="150.2" y2="481" stroke="#7a7a7a" stroke-width="1" />
<path d="M186 473.6 H195.4 M190.7 468.9 V478.3" fill="none" stroke="#e8e8e8" stroke-width="1.3" />
<circle cx="432.5" cy="471.2" r="0.9" fill="#e0e0e0"/>
<circle cx="432.5" cy="474.4" r="0.9" fill="#e0e0e0"/>
<circle cx="432.5" cy="477.6" r="0.9" fill="#e0e0e0"/>
<rect x="445.4" y="467.6" width="253.2" height="13.2" fill="#474747" rx="6.6" />
<path d="M455 470.6 L450 474.2 L455 477.8 Z" fill="#d6d6d6" stroke="none" stroke-width="1" />
<rect x="460" y="471.1" width="205.8" height="6.6" fill="#c6c6c6" rx="3.3" />
<path d="M689.4 470.6 L694.8 474.2 L689.4 477.8 Z" fill="#d6d6d6" stroke="none" stroke-width="1" />
<rect x="1.5" y="487.6" width="713.5" height="19.4" fill="#333333" />
<text x="7.4" y="501.3" font-size="10" fill="#e4e4e4" stroke="#e4e4e4" stroke-width="0.15" font-family="&quot;Liberation Sans&quot;,sans-serif" textLength="24.5" lengthAdjust="spacingAndGlyphs" >Ready</text>
<text x="46.0" y="501.3" font-size="10" fill="#e4e4e4" stroke="#e4e4e4" stroke-width="0.15" font-family="&quot;Liberation Sans&quot;,sans-serif" textLength="47.3" lengthAdjust="spacingAndGlyphs" >Sheet 1 of 1</text>
<text x="106.7" y="501.3" font-size="10" fill="#e4e4e4" stroke="#e4e4e4" stroke-width="0.15" font-family="&quot;Liberation Sans&quot;,sans-serif" textLength="77.3" lengthAdjust="spacingAndGlyphs" >Workbook Statistics</text>
<text x="327.0" y="501.3" font-size="10" fill="#e4e4e4" stroke="#e4e4e4" stroke-width="0.15" font-family="&quot;Liberation Sans&quot;,sans-serif" textLength="48.8" lengthAdjust="spacingAndGlyphs" >Average: 4.6</text>
<text x="389.6" y="501.3" font-size="10" fill="#e4e4e4" stroke="#e4e4e4" stroke-width="0.15" font-family="&quot;Liberation Sans&quot;,sans-serif" textLength="37.3" lengthAdjust="spacingAndGlyphs" >Count: 18</text>
<text x="440.4" y="501.3" font-size="10" fill="#e4e4e4" stroke="#e4e4e4" stroke-width="0.15" font-family="&quot;Liberation Sans&quot;,sans-serif" textLength="30.8" lengthAdjust="spacingAndGlyphs" >Sum: 23</text>
<path d="M201.8 492.7 H212.4 V496.2 M201.8 492.7 V502.4 H205.8 M201.8 495.2 H212.4" fill="none" stroke="#dedede" stroke-width="1.1" />
<circle cx="209.4" cy="499.8" r="3.1" fill="#333" stroke="#dedede" stroke-width="1.2"/>
<circle cx="209.4" cy="499.8" r="1.4" fill="#dedede"/>
<rect x="487.8" y="487.6" width="34.2" height="19.4" fill="#3f3f3f" />
<path d="M499.5 492.1 H510 V502 H499.5 Z M503 492.1 V502 M506.5 492.1 V502 M499.5 495.4 H510 M499.5 498.7 H510" fill="none" stroke="#f2f2f2" stroke-width="1.2" />
<path d="M533.6 491.9 H544.5 V502 H533.6 Z" fill="none" stroke="#e4e4e4" stroke-width="1.2" />
<path d="M536.7 494.4 H541.4 V500.4 H536.7 Z M539.05 494.4 V500.4" fill="none" stroke="#b0b0b0" stroke-width="0.9" />
<path d="M567.4 491.9 H578.4 V502 H567.4 Z" fill="none" stroke="#e4e4e4" stroke-width="1.2" />
<path d="M570.4 491.9 V497.6 H578.4 M573.5 491.9 V496.6" fill="none" stroke="#e4e4e4" stroke-width="1.1" />
<line x1="595" y1="497.6" x2="601" y2="497.6" stroke="#d8d8d8" stroke-width="1.1" />
<line x1="605.5" y1="497.7" x2="690.3" y2="497.7" stroke="#a6a6a6" stroke-width="1" />
<rect x="646.3" y="492.9" width="4.2" height="9.6" fill="#d4d4d4" rx="0.8" />
<path d="M694.4 497.6 H701 M697.7 494.3 V500.9" fill="none" stroke="#d8d8d8" stroke-width="1.1" />
<rect x="0" y="506" width="715" height="1" fill="#484848" />
<defs><filter id="sh" x="-10%" y="-10%" width="120%" height="125%"><feGaussianBlur stdDeviation="4"/></filter></defs>
<rect x="318.5" y="122.5" width="268" height="147" fill="#000" filter="url(#sh)" opacity="0.5"/>
<rect x="320.3" y="121.6" width="264.3" height="144.0" fill="#f0f0f0" />
<rect x="320.3" y="121.6" width="264.3" height="25.6" fill="#ffffff" />
<rect x="319.9" y="121.2" width="265.1" height="144.8" fill="none" stroke="#6f6f6f" stroke-width="0.8" opacity="0.55"/>
<text x="326.4" y="138.1" font-size="11.5" fill="#15151f" stroke="#15151f" stroke-width="0.15" font-family="&quot;Liberation Sans&quot;,sans-serif" textLength="79.7" lengthAdjust="spacingAndGlyphs" >Confirm Password</text>
<text x="523.2" y="138.2" font-size="11.5" fill="#1a1a1a" font-family="&quot;Liberation Sans&quot;,sans-serif" textLength="4.5" lengthAdjust="spacingAndGlyphs" >?</text>
<path d="M560.3 130.3 L568.2 138.3 M568.2 130.3 L560.3 138.3" fill="none" stroke="#222" stroke-width="1" />
<text x="325.8" y="163.1" font-size="10.5" fill="#111" stroke="#111" stroke-width="0.15" font-family="&quot;Liberation Sans&quot;,sans-serif" textLength="120.0" lengthAdjust="spacingAndGlyphs" >Reenter password to proceed.</text>
<line x1="325.8" y1="164.5" x2="331.4" y2="164.5" stroke="#1a1a1a" stroke-width="0.8" />
<rect x="325.5" y="168" width="254.2" height="17.6" fill="#ffffff" stroke="#b2b2b2" stroke-width="1" />
<circle cx="329.6" cy="176.5" r="2.15" fill="#000"/>
<circle cx="335.2" cy="176.5" r="2.15" fill="#000"/>
<circle cx="340.8" cy="176.5" r="2.15" fill="#000"/>
<rect x="324.0" y="168.1" width="117.2" height="16.6" fill="none" stroke="#ed1c24" stroke-width="2.5" />
<text x="325.8" y="208.7" font-size="10.5" fill="#111" stroke="#111" stroke-width="0.15" font-family="&quot;Liberation Sans&quot;,sans-serif" textLength="187.4" lengthAdjust="spacingAndGlyphs" >Sheet protection helps prevent accidental edits.</text>
<text x="326.4" y="232.8" font-size="10.5" fill="#4577b3" stroke="#4577b3" stroke-width="0.1" font-family="&quot;Liberation Sans&quot;,sans-serif" textLength="46.0" lengthAdjust="spacingAndGlyphs" >Learn More</text>
<line x1="326.4" y1="234" x2="372.4" y2="234" stroke="#4a78b0" stroke-width="0.8" />
<rect x="453.8" y="240.5" width="57.6" height="17.2" fill="#e1e1e1" stroke="#0f7bd8" stroke-width="1.6" />
<text x="476.9" y="252.8" font-size="10.5" fill="#111" stroke="#111" stroke-width="0.15" font-family="&quot;Liberation Sans&quot;,sans-serif" textLength="11.2" lengthAdjust="spacingAndGlyphs" >OK</text>
<rect x="446.2" y="237.8" width="71.4" height="24.3" fill="none" stroke="#ed1c24" stroke-width="2.6" />
<rect x="521.6" y="240.9" width="56.8" height="17.2" fill="#e1e1e1" stroke="#adadad" stroke-width="1" />
<text x="536.9" y="252.8" font-size="10.5" fill="#111" stroke="#111" stroke-width="0.15" font-family="&quot;Liberation Sans&quot;,sans-serif" textLength="25.7" lengthAdjust="spacingAndGlyphs" >Cancel</text>
</svg>
</body></html>
